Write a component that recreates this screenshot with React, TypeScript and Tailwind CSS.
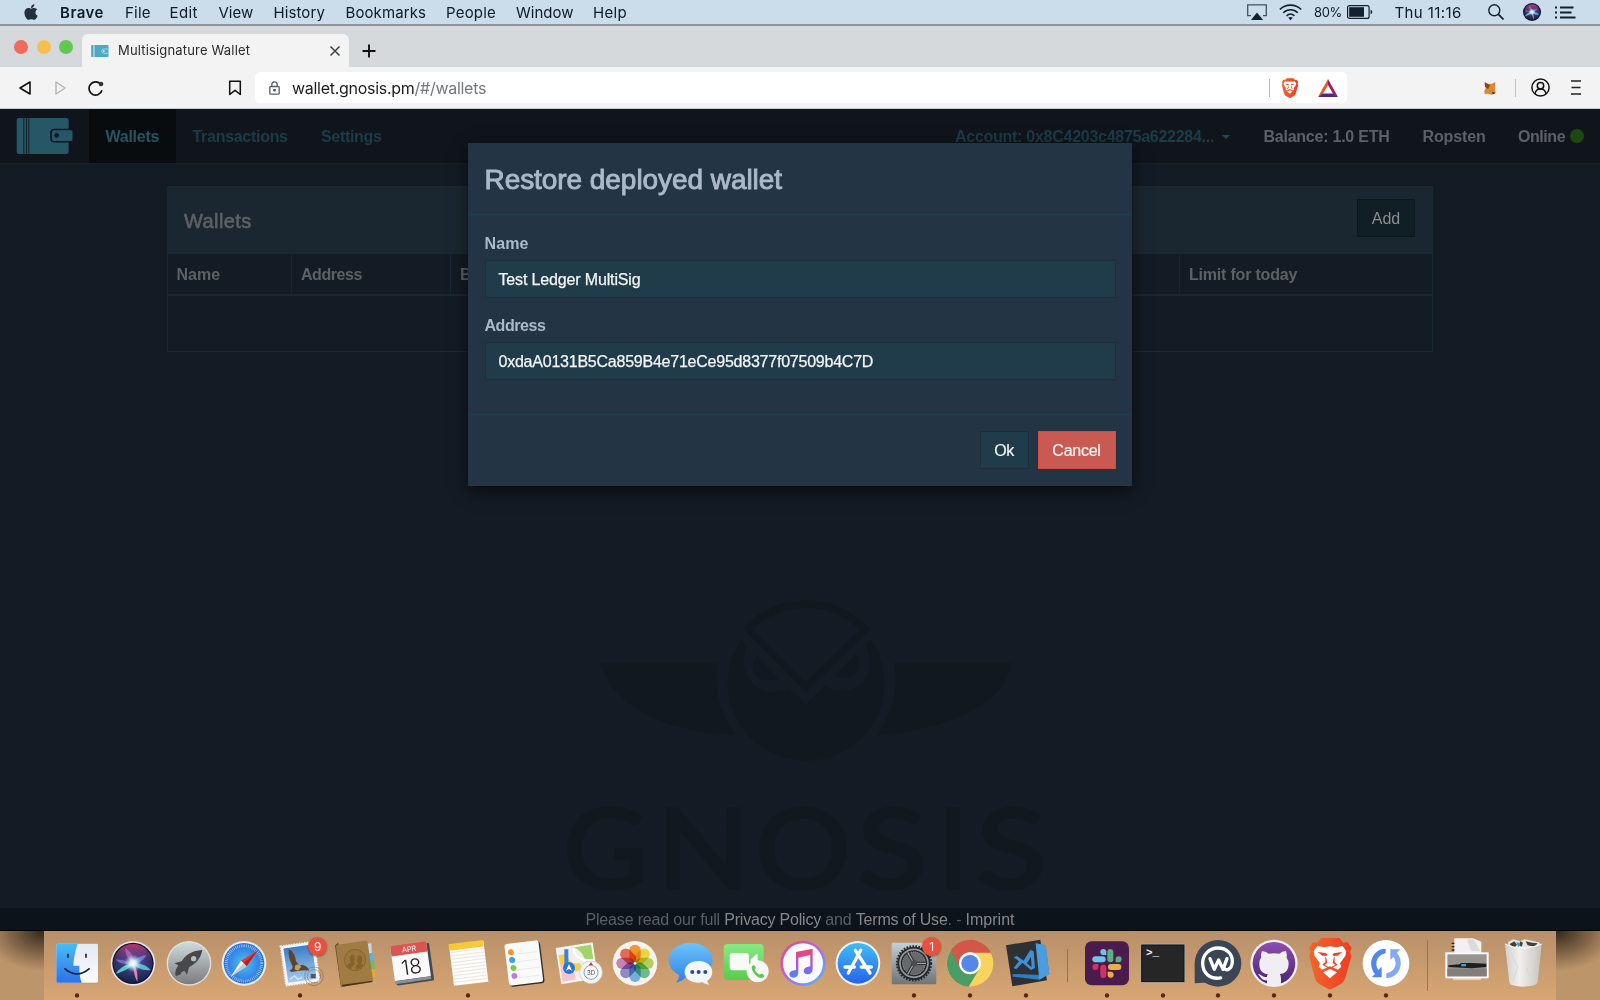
import React from 'react';
import { FaApple } from 'react-icons/fa';

const menuItems = [
  { label: 'Brave', cls: 'w-[65px] font-semibold tracking-[0.5px]' },
  { label: 'File', cls: 'w-[44.5px] tracking-[0.25px]' },
  { label: 'Edit', cls: 'w-[49px] tracking-[0.4px]' },
  { label: 'View', cls: 'w-[55px]' },
  { label: 'History', cls: 'w-[72px] tracking-[0.1px]' },
  { label: 'Bookmarks', cls: 'w-[100.5px] tracking-[0.1px]' },
  { label: 'People', cls: 'w-[70px] tracking-[0.2px]' },
  { label: 'Window', cls: 'w-[77px]' },
  { label: 'Help', cls: 'w-[40px] tracking-[0.3px]' },
];

function MenuBar() {
  return (
    <div className="flex h-6 shrink-0 items-center bg-[#cbdceb] text-[15px] leading-6 text-[#0d1a28]">
      <FaApple className="ml-[21.500px] mr-[20.500px] h-[18px] w-[18px] shrink-0 text-[#222f3d]" />
      {menuItems.map((m) => (
        <span key={m.label} className={`shrink-0 whitespace-nowrap pt-px ${m.cls}`}>{m.label}</span>
      ))}
      <div className="ml-auto flex items-center pr-[24.500px]">
        <svg className="mr-[12px]" width="20" height="17" viewBox="0 0 20 17">
          <path d="M4 11.7H.7V.8h18.600v10.900H16" fill="none" stroke="#44525f" strokeWidth="1.3" />
          <path d="M10 8.500 16 16H4Z" fill="#13202d" />
        </svg>
        <svg className="mr-[12px]" width="23" height="17" viewBox="0 0 23 17" fill="none" stroke="#13202d" strokeWidth="1.600">
          <path d="M.8 5.500C6.500-.4 16.500-.4 22.200 5.500M4.300 8.700c4-4 10.400-4 14.400 0M7.600 11.800c2.300-2.100 5.500-2.100 7.800 0" />
          <path d="M11.500 16.200 9.300 13.800q2.200-1.800 4.400 0Z" fill="#13202d" stroke="none" />
        </svg>
        <span className="w-[33px] text-[13px] tracking-[-0.4px]">80%</span>
        <svg className="mr-[21.500px]" width="26" height="14" viewBox="0 0 26 14">
          <rect x=".6" y=".6" width="21.500" height="12.800" rx="2" fill="none" stroke="#13202d" strokeWidth="1.200" />
          <rect x="2.200" y="2.200" width="14.800" height="9.600" fill="#13202d" />
          <path d="M23.600 4.500q3.500 2.500 0 5Z" fill="#13202d" />
        </svg>
        <span className="w-[93px] whitespace-nowrap pt-px tracking-[0.4px]">Thu 11:16</span>
        <svg className="mr-[19px]" width="16" height="16" viewBox="0 0 16 16" fill="none" stroke="#13202d" strokeWidth="1.400">
          <circle cx="6.300" cy="6.300" r="5.500" />
          <path d="m10.200 10.200 5.300 5.300" strokeWidth="1.700" />
        </svg>
        <svg className="mr-[14px]" width="18" height="18" viewBox="0 0 134 134"><circle cx="67" cy="67" r="67" fill="#14142c" /><SiriOrb /></svg>
        <svg width="21" height="13" viewBox="0 0 21 13" stroke="#13202d" strokeWidth="2">
          <path d="M5 1.500h13.500M5 6.500h11.500M5 11.500h15.500" />
          <path d="M0 1.500h2M0 6.500h2M0 11.500h2" />
        </svg>
      </div>
    </div>
  );
}

function SiriOrb() {
  return (
    <g>
      <defs>
        <radialGradient id="siriBase" cx=".5" cy=".5" r=".5">
          <stop offset="0" stopColor="#7d63a8" />
          <stop offset=".55" stopColor="#3a2a66" />
          <stop offset="1" stopColor="#140f2a" />
        </radialGradient>
        <linearGradient id="siriHue" x1="0" y1="0" x2="0" y2="1">
          <stop offset="0" stopColor="#e0407f" stopOpacity=".8" />
          <stop offset=".45" stopColor="#4a4fa0" stopOpacity=".4" />
          <stop offset="1" stopColor="#0b2a45" stopOpacity=".8" />
        </linearGradient>
        <radialGradient id="siriCore"><stop offset="0" stopColor="#fff" /><stop offset=".35" stopColor="#e8fbff" stopOpacity=".9" /><stop offset="1" stopColor="#9fe8ff" stopOpacity="0" /></radialGradient>
      </defs>
      <circle cx="67" cy="67" r="62" fill="url(#siriBase)" />
      <circle cx="67" cy="67" r="58" fill="url(#siriHue)" />
      <path d="M66 68C50 66 24 84 16 98 36 92 56 84 66 68Z" fill="#5ff0e0" opacity=".8" />
      <path d="M68 68c22-2 42 6 52 20C98 88 82 84 68 68Z" fill="#5fd8ea" opacity=".8" />
      <path d="M66 68c2 20 6 40 14 54 2-24-2-44-14-54Z" fill="#f28ac0" opacity=".9" />
      <path d="M68 66c0-22-8-36-24-44 0 20 8 36 24 44Z" fill="#d68ad8" opacity=".5" />
      <path d="M68 66c10-18 26-22 38-24-4 14-18 24-38 24Z" fill="#7a9af5" opacity=".7" />
      <path d="M66 66C44 60 28 54 16 56c10 12 32 16 50 10Z" fill="#b0a0f0" opacity=".5" />
      <circle cx="67" cy="67" r="26" fill="url(#siriCore)" />
    </g>
  );
}

function TabStrip() {
  return (
    <div className="flex h-[43px] shrink-0 items-end border-t-2 border-[#8c959b] bg-[#d5d9dc] pl-[14px]">
      <div className="mb-[13px] flex w-[68px] gap-[8.500px]">
        <span className="h-[14px] w-[14px] rounded-full bg-[#f06a5e]" />
        <span className="h-[14px] w-[14px] rounded-full bg-[#f7bf4f]" />
        <span className="h-[14px] w-[14px] rounded-full bg-[#63c756]" />
      </div>
      <div className="flex h-[33px] w-[267px] items-center rounded-t-[6px] bg-[#f3f3f3] pl-[9px] pr-[8px]">
        <svg className="mr-[9px]" width="18" height="12" viewBox="0 0 53 36">
          <path d="M2 0h5v36H2q-2 0-2-2V2Q0 0 2 0Z" fill="#4fa9c6" />
          <path d="M8 0h3v36H8Z" fill="#86c5d8" />
          <path d="M11 0h39q2 0 2 2v32q0 2-2 2H11Z" fill="#4fa9c6" />
          <path d="M53 12H38a6.500 6.500 0 0 0 0 13h15" fill="none" stroke="#a9dbe8" strokeWidth="2.500" />
          <circle cx="38" cy="18.500" r="3" fill="#d5eef5" />
        </svg>
        <span className="whitespace-nowrap pt-px text-[13px] tracking-[0.17px] text-[#2b2b2b]">Multisignature Wallet</span>
        <svg className="ml-auto" width="12" height="12" viewBox="0 0 12 12" stroke="#3c4043" strokeWidth="1.500"><path d="m1.500 1.500 9 9m0-9-9 9" /></svg>
      </div>
      <svg className="mb-[9px] ml-[13px]" width="14" height="14" viewBox="0 0 14 14" stroke="#111" strokeWidth="1.900"><path d="M7 .5v13M.5 7h13" /></svg>
    </div>
  );
}

function BraveLion() {
  return (
    <g>
      <path d="M364 54h54l12 14 12-2 13 17-5 12 4 14-18 64q-4 12-12 18l-28 15q-6 3-12 0l-28-15q-8-6-12-18l-16-64 4-14-5-12 13-17 12 2Z" fill="url(#braveOrange)" />
      <path d="M341 94 352 78 372 82 390 79 408 82 428 78 439 94 436 108 420 130 424 140 414 149 390 139 366 149 356 140 360 130 344 108Z" fill="#fff" />
      <path d="M353 96 376 99 383 103 379 108 367 107ZM427 96 404 99 397 103 401 108 413 107Z" fill="#ee4623" />
      <path d="M378 110 382 128 374 135 390 143 406 135 398 128 402 110 404 112 404 126 413 134 390 148 367 134 376 126 376 112Z" fill="#ee4623" />
      <path d="M369 157 390 147 411 157 390 175Z" fill="#fff" />
    </g>
  );
}

function Toolbar() {
  return (
    <div className="flex h-[42px] shrink-0 items-center border-b border-[#c9cdd0] bg-[#f3f3f3]">
      <svg className="ml-[17.500px]" width="14" height="16" viewBox="0 0 14 16" fill="none" stroke="#111" strokeWidth="1.600" strokeLinejoin="round"><path d="M12 2v12L2 8Z" /></svg>
      <svg className="ml-[21px]" width="14" height="16" viewBox="0 0 14 16" fill="none" stroke="#b5b5b5" strokeWidth="1.400" strokeLinejoin="round"><path d="M3 2v12l9-6Z" /></svg>
      <svg className="ml-[20px]" width="18" height="16" viewBox="0 0 18 16" fill="none" stroke="#111" strokeWidth="1.700"><path d="M13.500 4A6.600 6.600 0 1 0 15 10.300" /><circle cx="14" cy="4" r="2.300" fill="#333" stroke="none" /></svg>
      <svg className="ml-[123px]" width="14" height="16" viewBox="0 0 14 16" fill="none" stroke="#111" strokeWidth="1.500" strokeLinejoin="round"><path d="M1.700 1.200h10.600v13.300L7 10.300l-5.300 4.200Z" /></svg>
      <div className="ml-[13.500px] flex h-[31px] w-[1092px] items-center rounded-[5px] bg-white pl-[14px] pr-[9.500px]">
        <svg width="11" height="14" viewBox="0 0 11 14" fill="none" stroke="#5a5e62" strokeWidth="1.300"><rect x=".8" y="5.500" width="9.400" height="7.700" rx="1" /><path d="M2.800 5.500V3.500a2.700 2.700 0 0 1 5.400 0v2" /><circle cx="5.500" cy="9.300" r=".8" fill="#222" /></svg>
        <span className="ml-[12px] whitespace-nowrap text-[16px] tracking-[-0.28px] text-[#1d1d1f]">wallet.gnosis.pm<span className="text-[#75787c]">/#/wallets</span></span>
        <span className="ml-auto h-[18px] w-px bg-[#b9b9b9]" />
        <svg className="ml-[11px]" width="18" height="20" viewBox="324 52 134 156">
          <defs><linearGradient id="braveOrange" x1="0" x2="1"><stop offset="0" stopColor="#f2652b" /><stop offset="1" stopColor="#ee3d23" /></linearGradient></defs>
          <BraveLion />
        </svg>
        <svg className="ml-[19px]" width="20" height="18" viewBox="0 0 20 18">
          <path d="M10 0v6L4.800 15 0 18Z" fill="#f0502b" />
          <path d="M10 0v6l5.200 9L20 18Z" fill="#9a1f5f" />
          <path d="M0 18h20l-4.800-3.600H4.800Z" fill="#4b2a87" />
        </svg>
      </div>
      <svg className="ml-[137px]" width="12" height="14" viewBox="0 0 36 42">
        <path d="M2 4 12 9 24 8 34 3 33 24 35 36 24 41 10 38 2 40 1 30 6 20Z" fill="#dd8635" />
        <path d="M2 4 12 9 18 12 12 24 3 18Z" fill="#7b4a23" />
        <path d="m24 32 10 4-7 4Z" fill="#2b1b12" />
      </svg>
      <span className="ml-[18.500px] h-[18px] w-px bg-[#c4c4c4]" />
      <svg className="ml-[15px]" width="19" height="19" viewBox="0 0 19 19" fill="none" stroke="#111" strokeWidth="1.500"><circle cx="9.500" cy="9.500" r="8.600" /><circle cx="9.500" cy="7.700" r="3.200" /><path d="M4 16c.4-3.400 2.500-5 5.500-5s5.100 1.600 5.500 5" /></svg>
      <svg className="ml-[21px]" width="10" height="15" viewBox="0 0 10 15" stroke="#222" strokeWidth="1.500"><path d="M0 1h10M.5 7.500h9M0 14h10" /></svg>
    </div>
  );
}

function WalletLogo() {
  return (
    <svg width="57" height="36" viewBox="0 0 167 108" className="shrink-0">
      <rect x="0" y="0" width="156" height="108" rx="7" fill="#265766" />
      <path d="M21.500 0v108M29.500 0v108M36.500 0v108" stroke="#0f151b" strokeWidth="2.500" />
      <path d="M167 35h-54q-10 0-10 10v16q0 10 10 10h54" fill="#265766" stroke="#0f151b" strokeWidth="5" />
      <rect x="106" y="37" width="61" height="32" rx="8" fill="#265766" />
      <circle cx="120" cy="52" r="7" fill="#0f151b" />
      <rect x="158" y="28" width="9" height="7" fill="#0f151b" /><rect x="158" y="72" width="9" height="6" fill="#0f151b" />
    </svg>
  );
}

function NavBar() {
  return (
    <div className="flex h-[55px] shrink-0 items-center border-b border-[#14222a] bg-[#0f151b] pl-[16px] font-['Liberation_Sans',sans-serif] text-[16px] font-bold">
      <WalletLogo />
      <span className="ml-[16px] flex h-full w-[87px] items-center bg-[#080c0f] pl-[16.500px] pt-[2px] tracking-[-0.26px] text-[#275464]">Wallets</span>
      <span className="ml-[16.500px] w-[128.500px] pt-[2px] tracking-[-0.29px] text-[#1d3b48]">Transactions</span>
      <span className="pt-[2px] tracking-[-0.31px] text-[#1d3b48]">Settings</span>
      <div className="ml-auto flex items-center whitespace-nowrap pr-[16px] pt-[2px] text-[#5d6166]">
        <span className="w-[267px] tracking-[-0.27px] text-[#1d3b48]">Account: 0x8C4203c4875a622284...</span>
        <span className="mr-[33.500px] h-0 w-0 border-x-[4px] border-t-[4px] border-x-transparent border-t-[#24485a]" />
        <span className="w-[159px] tracking-[-0.24px]">Balance: 1.0 ETH</span>
        <span className="w-[95.500px] tracking-[-0.14px]">Ropsten</span>
        <span className="w-[52px] tracking-[-0.45px]">Online</span>
        <span className="-mt-[2px] mr-[0.500px] h-[13.500px] w-[13.500px] rounded-full bg-[#1e4712]" />
      </div>
    </div>
  );
}

function WalletsPanel() {
  return (
    <div className="mx-auto mt-[22px] w-[1266px] shrink-0 border border-[#1a2930] font-['Liberation_Sans',sans-serif] text-[16px] text-[#5d6166]">
      <div className="flex h-[67px] items-center justify-between bg-[#1b2730] pl-[16px] pr-[17px]">
        <span className="text-[20px] tracking-[0.4px] [-webkit-text-stroke:0.6px_#5d6166]">Wallets</span>
        <span className="-mt-[5px] flex h-[38px] w-[58px] items-center justify-center border border-[#0b171c] bg-[#101e25] pt-px text-[#8b8d8e]">Add</span>
      </div>
      <div className="flex h-[42px] border-b-2 border-[#1a2730] font-bold leading-[42px]">
        <span className="h-[40px] w-[124px] border-r border-[#1a2730] pl-[8.500px]">Name</span>
        <span className="h-[40px] w-[159px] border-r border-[#1a2730] pl-[9px] tracking-[-0.45px]">Address</span>
        <span className="h-[40px] w-[729px] border-r border-[#1a2730] pl-[9px]">Balance</span>
        <span className="h-[40px] pl-[9px] tracking-[-0.2px]">Limit for today</span>
      </div>
      <div className="h-[55px]" />
    </div>
  );
}

const wordmark = [
  { ch: 'G', x: 69, w: 251 },
  { ch: 'N', x: 346, w: 272 },
  { ch: 'O', x: 636, w: 284 },
  { ch: 'S', x: 937, w: 208 },
  { ch: 'I', x: 1175, w: 93 },
  { ch: 'S', x: 1289, w: 210 },
];

function GnosisMark() {
  return (
    <svg className="ml-[540px] mt-auto block h-[328px] w-[530px] shrink-0 overflow-visible" viewBox="0 3 1568 984" preserveAspectRatio="none" fill="#10191f">
      <path fillRule="evenodd" d="M600 148A250 250 0 0 1 975 150L787 340ZM627 152 787 310 947 152A228 228 0 0 0 627 152Z" />
      <path d="M595 183A232 232 0 1 0 980 183L963 198C995 265 965 335 895 335 873 335 855 328 843 322L787 377 737 328C650 370 575 290 612 200Z" />
      <path d="M640 230 705 297C655 320 610 280 640 230ZM937 225 872 291C920 315 965 275 937 225Z" />
      <path d="M180 251H525C515 330 530 400 578 467 380 460 220 390 180 251ZM1393 251H1047C1060 330 1045 400 998 467 1190 455 1380 380 1393 251Z" />
      <g fontFamily="Lato, sans-serif" fontSize="332" stroke="#10191f" strokeWidth="9">
        {wordmark.map((l, i) => (
          <text key={i} x={l.x} y="926" textLength={l.w} lengthAdjust="spacingAndGlyphs">{l.ch}</text>
        ))}
      </g>
    </svg>
  );
}

function Field({ label, value, cls, labelCls }: { label: string; value: string; cls: string; labelCls: string }) {
  return (
    <div className="mb-[16.500px]">
      <div className={`mb-[5px] h-[23px] font-bold leading-[24px] ${labelCls}`}>{label}</div>
      <div className={`flex h-[37.500px] items-center border border-[#1b303c] bg-[#203b49] pl-[13px] pt-[2px] text-[#f4f6f7] [-webkit-text-stroke:0.25px_#f4f6f7] ${cls}`}>{value}</div>
    </div>
  );
}

function RestoreModal() {
  return (
    <div className="absolute left-[468px] top-[143px] h-[343px] w-[664px] bg-[#233544] font-['Liberation_Sans',sans-serif] text-[16px] text-[#abb9c8] shadow-[0_5px_16px_rgba(0,0,0,0.6)]">
      <div className="flex h-[72px] items-center border-b border-[#213d49] pl-[16.500px] pt-[2px] text-[28px] tracking-[-0.06px] [-webkit-text-stroke:0.9px_#abb9c8]">Restore deployed wallet</div>
      <div className="h-[199px] pl-[16.500px] pr-[16.500px] pt-[17px]">
        <Field label="Name" value="Test Ledger MultiSig" cls="tracking-[-0.15px]" labelCls="tracking-[0.1px]" />
        <Field label="Address" value="0xdaA0131B5Ca859B4e71eCe95d8377f07509b4C7D" cls="tracking-[-0.23px]" labelCls="tracking-[-0.45px]" />
      </div>
      <div className="flex justify-end gap-[8.500px] border-t border-[#213d49] pr-[16.500px] pt-[16px] text-[#f4f6f7] [-webkit-text-stroke:0.2px_#f4f6f7]">
        <span className="flex h-[38px] w-[49px] items-center justify-center border border-[#1b303c] bg-[#203b49] pr-px pt-px tracking-[-0.5px]">Ok</span>
        <span className="flex h-[38px] w-[78px] items-center justify-center border border-[#d64a45] bg-[#c95a52] pt-px tracking-[-0.25px]">Cancel</span>
      </div>
    </div>
  );
}

function Footer() {
  return (
    <div className="flex h-[22px] shrink-0 items-center justify-center whitespace-pre bg-[#0d131a] pt-[2px] font-['Liberation_Sans',sans-serif] text-[16px] leading-[20px] tracking-[-0.17px] text-[#5a5f66]">
      <span>Please read our full </span>
      <span className="tracking-[-0.2px] text-[#85878a]">Privacy Policy</span>
      <span> and </span>
      <span className="tracking-[-0.2px] text-[#85878a]">Terms of Use</span>
      <span>. - </span>
      <span className="tracking-normal text-[#85878a]">Imprint</span>
    </div>
  );
}

/* Dock icons: each cell is drawn on a 168 x 205 grid, centred on cx. */
function DockIcon({ cx, dot, badge, children }: { cx: number; dot?: boolean; badge?: string; children: React.ReactNode }) {
  return (
    <div className="relative h-[68.300px] w-[55.820px] shrink-0">
      <svg className="block h-full w-full overflow-visible" viewBox={`${cx - 84} 33 167.5 205`}>
        {children}
        {dot && <circle cx={cx} cy="226.500" r="6.500" fill="#5a2210" />}
      </svg>
      {badge && (
        <span className="absolute left-[36px] top-[6px] flex h-[19px] w-[19px] items-center justify-center rounded-full bg-[#e9503f] text-[12px] text-white shadow-[0_1px_2px_rgba(0,0,0,0.4)]">{badge}</span>
      )}
    </div>
  );
}

const petals = [
  { a: 0, c: '#f7941e' }, { a: 45, c: '#f5dc35' }, { a: 90, c: '#b4d456' }, { a: 135, c: '#5fbf8a' },
  { a: 180, c: '#6ab0e6' }, { a: 225, c: '#8a86cf' }, { a: 270, c: '#c47db8' }, { a: 315, c: '#ee5f4e' },
];

function Dock() {
  return (
    <div className="relative flex h-[69px] w-[1512px] shrink-0 overflow-hidden rounded-t-[5px] bg-linear-to-b from-[#b8906a] to-[#d8a674] pl-[5px]">
      <DockIcon cx={230} dot>
        <defs>
          <linearGradient id="fBlue" x1="0" y1="0" x2="0" y2="1"><stop offset="0" stopColor="#47bdf6" /><stop offset="1" stopColor="#2f71ea" /></linearGradient>
          <linearGradient id="fWhite" x1="0" y1="0" x2="0" y2="1"><stop offset="0" stopColor="#e3eaf2" /><stop offset="1" stopColor="#fafbfd" /></linearGradient>
        </defs>
        <rect x="168" y="71" width="125" height="119" rx="5" fill="#9a7758" opacity=".6" />
        <rect x="168" y="71" width="125" height="117" rx="4" fill="url(#fWhite)" />
        <path d="M172 71h60c-8 24-12 44-13 66h18c-1 20 2 36 7 51h-72q-4 0-4-4V75q0-4 4-4Z" fill="url(#fBlue)" />
        <path d="M203 101v12M257 101v12" stroke="#15243a" strokeWidth="5" />
        <path d="M192 145q38 33 76 0" fill="none" stroke="#15243a" strokeWidth="5" />
      </DockIcon>
      <DockIcon cx={397}>
        <circle cx="397" cy="130" r="67" fill="#e4e4ea" />
        <g transform="translate(330 63)"><SiriOrb /></g>
      </DockIcon>
      <DockIcon cx={566}>
        <defs><linearGradient id="gLaunch" x1="0" y1="0" x2="0" y2="1"><stop offset="0" stopColor="#d0dadd" /><stop offset="1" stopColor="#7b7b7d" /></linearGradient></defs>
        <circle cx="566" cy="130" r="67" fill="#dfe2e2" /><circle cx="566" cy="130" r="63" fill="url(#gLaunch)" />
        <path d="M606 90c-30 2-50 14-62 34l-22 6 12 6-8 14 12 10 14-8 8 12 6-22c22-12 36-28 40-52Z" fill="#46484b" />
        <circle cx="580" cy="116" r="8" fill="#b5bcbf" />
        <path d="M530 148c-6 4-6 14-4 20 8-2 16-4 18-10-6 0-12-4-14-10Z" fill="#46484b" />
      </DockIcon>
      <DockIcon cx={733}>
        <defs><radialGradient id="gSaf"><stop offset="0" stopColor="#4fc4f0" /><stop offset="1" stopColor="#2a6fe0" /></radialGradient></defs>
        <circle cx="733" cy="130" r="67" fill="#e9edf1" /><circle cx="733" cy="130" r="61" fill="url(#gSaf)" />
        <circle cx="733" cy="130" r="53" fill="none" stroke="#d7ebfa" strokeWidth="9" strokeDasharray="1.800 3.750" opacity=".85" />
        <path d="M775 90 724 122 741 139Z" fill="#e33b34" /><path d="M741 139 775 90 732 130Z" fill="#b91f22" />
        <path d="M693 170 724 122 741 139Z" fill="#f3f3f3" /><path d="M693 170 741 139 732 130Z" fill="#c3c8cc" />
      </DockIcon>
      <DockIcon cx={900} dot badge="9">
        <defs><linearGradient id="gMail" x1="0" y1="0" x2="0" y2="1"><stop offset="0" stopColor="#3d7cc9" /><stop offset="1" stopColor="#a8cbe8" /></linearGradient></defs>
        <g transform="rotate(-8 900 130)">
          <rect x="849" y="71" width="102" height="120" fill="#f5f5f5" stroke="#f5f5f5" strokeWidth="5" strokeDasharray="4 4" />
          <rect x="857" y="79" width="86" height="104" fill="url(#gMail)" />
        </g>
        <path d="M866 88c12 4 20 18 22 36l10 12c14-4 26 4 30 16-12-2-20 0-30 0l-24 4-6-6c6 0 10-4 10-10-6-14-14-28-12-52Z" fill="#5d452c" />
        <path d="M886 136c8-4 14-2 18 4l-10 12-10-4Z" fill="#c79d5e" />
        <g fill="none" stroke="#555" opacity=".5" strokeWidth="2.500"><circle cx="942" cy="169" r="28" /><circle cx="942" cy="169" r="20" /></g>
        <rect x="932" y="162" width="15" height="13" fill="#2b3f58" opacity=".8" />
        <path d="m870 178 14-10 10 10 12-6" stroke="#eaf2fa" strokeWidth="4" fill="none" opacity=".7" />
      </DockIcon>
      <DockIcon cx={1068}>
        <path d="m1102 72 12-3 2 30-12 2Z" fill="#c9d8e8" /><path d="m1104 100 14-2 3 24-12 2Z" fill="#51b7e8" /><path d="m1108 124 14-2 3 24-12 2Z" fill="#68c354" /><path d="m1112 149 13-2 2 24-12 3Z" fill="#f2a13b" />
        <path d="m1005 76 10-8 12 130-4 4Z" fill="#5b4522" />
        <path d="m1012 74 84-12q6-1 7 5l16 112q1 7-6 8l-86 13q-4 1-5-4l-14-116q0-5 4-6Z" fill="#a17c42" />
        <path d="m1027 200 90-14v-4l-91 12Z" fill="#4a3718" />
        <circle cx="1065" cy="120" r="32" fill="#9a763d" stroke="#86642f" strokeWidth="3" />
        <path d="M1040 140q2-8 12-12-6-16 2-24 10-2 10 12-1 8-3 12l5 4q-12 6-12 14-10-1-14-6ZM1066 146q0-10 8-14-6-14 2-26 12 0 10 18-1 5-3 8l8 4q-8 12-25 10Z" fill="#84622d" />
      </DockIcon>
      <DockIcon cx={36}>
        <g transform="rotate(-8 36 130)">
          <rect x="-18" y="76" width="113" height="114" rx="4" fill="#454a50" />
          <rect x="-22" y="72" width="109" height="104" rx="3" fill="#fafafa" />
          <rect x="-22" y="176" width="109" height="9" fill="#8b9096" />
          <path d="M-22 101V75q0-5 5-5h99q5 0 5 5v26Z" fill="#dc5450" />
          <text x="33" y="94" textAnchor="middle" fontFamily="Inter" fontSize="22" fill="#fff">APR</text>
          <text x="33" y="162" textAnchor="middle" fontFamily="Inter" fontWeight="300" fontSize="62" fill="#1d1d1f">18</text>
        </g>
      </DockIcon>
      <DockIcon cx={203} dot>
        <g transform="rotate(-7 203 130)">
          <rect x="153" y="68" width="104" height="124" fill="#fdfcf8" />
          <path d="M153 92h104M153 102h104M153 112h104M153 122h104M153 132h104M153 142h104M153 152h104M153 162h104M153 172h104M153 182h104" stroke="#d5d2ca" strokeWidth="1.500" />
          <rect x="152" y="66" width="104" height="20" fill="#f6c93b" />
        </g>
      </DockIcon>
      <DockIcon cx={371}>
        <g transform="rotate(-7 371 130)">
          <rect x="321" y="70" width="105" height="126" rx="9" fill="#2e2d2d" />
          <rect x="319" y="66" width="103" height="126" rx="8" fill="#fafafa" />
          <path d="M350 100h64M350 123h64M350 147h64M350 171h64" stroke="#ddd" strokeWidth="1.500" />
          <circle cx="336" cy="92" r="9" fill="#f7932b" /><circle cx="337" cy="116" r="9" fill="#35a2ee" /><circle cx="338" cy="140" r="9" fill="#72cf4d" /><circle cx="338" cy="164" r="9" fill="#c07ad9" />
        </g>
      </DockIcon>
      <DockIcon cx={538}>
        <path d="m468 84 111-17 16 108-110 18Z" fill="#f4f4f0" />
        <path d="m475 90 99-16 14 95-97 16Z" fill="#efeee8" />
        <path d="m524 82 50-8 7 44-24 4Q548 94 524 82Z" fill="#a0d56c" />
        <path d="m481 132 40 8 8 38-40 8Z" fill="#f3c6cf" /><path d="m477 106 20-4 20 28 24 0 8 20-20 4-26-16-22-6Z" fill="#f9cc4b" />
        <path d="M500 88v60" stroke="#3b82d8" strokeWidth="12" />
        <path d="m520 84q6 30 36 36l28 2" stroke="#fff" strokeWidth="7" fill="none" />
        <circle cx="508" cy="144" r="18" fill="#2b76d2" /><path d="m508 132 9 20-9-5-9 5Z" fill="#fff" />
        <circle cx="574" cy="157" r="34" fill="#f5f6f6" stroke="#c9c9c9" strokeWidth="2" /><circle cx="574" cy="157" r="21" fill="none" stroke="#8fa2ad" strokeWidth="3" />
        <path d="m574 126 6 9h-12Z" fill="#e0322a" /><text x="574" y="164" textAnchor="middle" fontFamily="Inter" fontSize="18" fill="#4b4b4b">3D</text>
      </DockIcon>
      <DockIcon cx={707}>
        <circle cx="707" cy="130" r="67" fill="#f6f3ef" />
        {petals.map((p) => (
          <rect key={p.a} x="690" y="74" width="34" height="54" rx="17" fill={p.c} className="mix-blend-multiply" opacity=".9" transform={`rotate(${p.a} 707 130)`} />
        ))}
        <circle cx="707" cy="130" r="4" fill="#fff" />
      </DockIcon>
      <DockIcon cx={874}>
        <defs><linearGradient id="gMsg" x1="0" y1="0" x2="0" y2="1"><stop offset="0" stopColor="#6cc4f8" /><stop offset="1" stopColor="#2f80ea" /></linearGradient></defs>
        <path d="M873 69c38 0 66 22 66 52s-28 52-66 52l-14-1c-8 8-18 14-30 16 6-8 9-14 9-24-18-8-31-24-31-43 0-30 28-52 66-52Z" fill="url(#gMsg)" />
        <path d="M896 123c24 0 42 14 42 33 0 11-6 20-15 26 0 4 2 8 6 12-8-1-14-3-20-7-4 1-8 1-13 1-24 0-41-13-41-32s18-33 41-33Z" fill="#f3f6fa" />
        <circle cx="878" cy="156" r="6" fill="#2c4f82" /><circle cx="897" cy="156" r="6" fill="#2c4f82" /><circle cx="917" cy="156" r="6" fill="#2c4f82" />
      </DockIcon>
      <DockIcon cx={1042}>
        <defs><linearGradient id="gFt" x1="0" y1="0" x2="0" y2="1"><stop offset="0" stopColor="#86ea83" /><stop offset="1" stopColor="#5acb4e" /></linearGradient></defs>
        <rect x="972" y="72" width="120" height="108" rx="11" fill="url(#gFt)" />
        <rect x="990" y="99" width="58" height="52" rx="10" fill="#f8faf8" /><path d="m1053 118 17-15q4-3 4 2v42l-21-14Z" fill="#f8faf8" />
        <circle cx="1074" cy="154" r="33" fill="#f7f7f7" />
        <path d="M1058 138c4-4 8-2 10 4 1 3-1 5-3 7 3 7 9 13 16 15 2-3 5-4 8-2 5 3 6 7 2 10-6 4-14 2-22-6-10-9-16-22-11-28Z" fill="#58c94d" />
      </DockIcon>
      <DockIcon cx={7}>
        <defs>
          <linearGradient id="gIt" x1="0" y1="0" x2="1" y2="1"><stop offset="0" stopColor="#f5436a" /><stop offset=".5" stopColor="#b266e8" /><stop offset="1" stopColor="#3ec3f5" /></linearGradient>
          <linearGradient id="gNote" x1="0" y1="0" x2="0" y2="1"><stop offset="0" stopColor="#f0446a" /><stop offset=".6" stopColor="#a35be0" /><stop offset="1" stopColor="#3f8df0" /></linearGradient>
        </defs>
        <circle cx="7" cy="130" r="68" fill="url(#gIt)" /><circle cx="7" cy="130" r="60" fill="#faf9fc" />
        <path d="m-14 96 50-10v60c0 12-8 17-15 17-8 0-12-5-12-10 0-8 8-12 20-14v-34l-36 8v44c0 12-8 16-15 16s-12-4-12-10c0-8 8-12 20-13Z" fill="url(#gNote)" />
      </DockIcon>
      <DockIcon cx={176}>
        <defs><linearGradient id="gAs" x1="0" y1="0" x2="0" y2="1"><stop offset="0" stopColor="#3fbdf7" /><stop offset="1" stopColor="#2663ea" /></linearGradient></defs>
        <circle cx="176" cy="130" r="67" fill="#eef2f6" /><circle cx="176" cy="130" r="61" fill="url(#gAs)" />
        <path d="m184 91-37 68M168 91l44 68M137 141h28M186 141h30" stroke="#fff" strokeWidth="10" strokeLinecap="round" />
      </DockIcon>
      <DockIcon cx={343} dot badge="1">
        <defs><linearGradient id="gPref" x1="0" y1="0" x2="0" y2="1"><stop offset="0" stopColor="#c3d0d8" /><stop offset="1" stopColor="#707376" /></linearGradient></defs>
        <rect x="276" y="68" width="134" height="125" rx="4" fill="url(#gPref)" />
        <circle cx="343" cy="130" r="50" fill="#26282a" /><circle cx="343" cy="130" r="51" fill="none" stroke="#26282a" strokeWidth="7" strokeDasharray="5 4" />
        <circle cx="343" cy="130" r="42" fill="none" stroke="#96999b" strokeWidth="5" />
        <circle cx="343" cy="130" r="34" fill="#66696c" /><circle cx="343" cy="130" r="34" fill="none" stroke="#a3a6a8" strokeWidth="3" strokeDasharray="3 3" />
        <path d="M343 130h36M343 130l-19-33M343 130l-19 33" stroke="#202224" strokeWidth="9" /><path d="M343 130h36M343 130l-19-33M343 130l-19 33" stroke="#a1a5a8" strokeWidth="4" />
        <circle cx="343" cy="130" r="9" fill="#4a4d50" />
      </DockIcon>
      <DockIcon cx={510} dot>
        <circle cx="510" cy="130" r="70" fill="#f9d35c" />
        <path d="M452 92A70 70 0 0 0 506 200L538 147 510 130Z" fill="#4b9d63" />
        <path d="M452 91A70 70 0 0 1 573 98H510L482 146Z" fill="#d3564b" />
        <circle cx="510" cy="130" r="33" fill="#fff" /><circle cx="510" cy="130" r="26" fill="#5588e6" />
      </DockIcon>
      <DockIcon cx={677} dot>
        <path d="m617 76 103-17 20 122-104 18Z" fill="#2f3033" />
        <path d="m706 70 30 6 11 86-30 17-80-9v-8l84 3Z" fill="#2d7ec4" /><path d="m706 70 30 6 11 86-30 17Z" fill="#4a9ee0" />
        <path d="m640 112 10-4 20 14 20-32 10 4 4 50-12 6-26-22-18 20-8-4 16-20Zm52-2-12 20 14 12Z" fill="#3d8fd6" fillRule="evenodd" />
      </DockIcon>
      <div className="ml-[13.200px] mr-[11px] mt-[18px] h-[33px] w-px shrink-0 bg-[#98704a]" />
      <DockIcon cx={920} dot>
        <rect x="854" y="64" width="132" height="132" rx="20" fill="#4b1b4d" />
        <g strokeWidth="18" strokeLinecap="round">
          <path d="M885 118h22" stroke="#6fc6ea" /><path d="M930 96v22" stroke="#57b182" /><path d="M932 141h22" stroke="#e5b04b" /><path d="M909 143v22" stroke="#d6305f" />
        </g>
        <path d="M918 105h-9a9 9 0 1 1 9-9Z" fill="#6fc6ea" /><path d="M946 127v-9a9 9 0 1 1 9 9Z" fill="#57b182" /><path d="M922 155h9a9 9 0 1 1-9 9Z" fill="#e5b04b" /><path d="M894 132v9a9 9 0 1 1-9-9Z" fill="#d6305f" />
      </DockIcon>
      <DockIcon cx={1087} dot>
        <rect x="1020" y="71" width="133" height="117" rx="4" fill="#aab5b9" /><rect x="1023" y="75" width="127" height="110" fill="#262626" stroke="#111" strokeWidth="3" />
        <text x="1036" y="108" fontFamily="Liberation Mono" fontWeight="700" fontSize="33" fill="#f0f0f0">&gt;_</text>
      </DockIcon>
      <DockIcon cx={56} dot>
        <circle cx="56" cy="130" r="70" fill="#3b4553" /><path d="M-14 132v58l60-4Z" fill="#3b4553" />
        <path d="M64 174c-34 5-54-16-54-44 0-26 20-46 46-46s43 18 43 40c0 24-20 34-28 16" fill="none" stroke="#fff" strokeWidth="10" strokeLinecap="round" />
        <path d="m32 116 13 32 13-28 13 28 12-32" fill="none" stroke="#fff" strokeWidth="10" strokeLinecap="round" strokeLinejoin="round" />
      </DockIcon>
      <DockIcon cx={223} dot>
        <defs><linearGradient id="gGh" x1="0" y1="0" x2="0" y2="1"><stop offset="0" stopColor="#8d4fae" /><stop offset="1" stopColor="#4a2575" /></linearGradient></defs>
        <circle cx="223" cy="130" r="71" fill="#f0eef2" /><circle cx="223" cy="130" r="64" fill="url(#gGh)" />
        <path d="M187 93q14 2 20 8 16-3 32 0 8-7 20-8 4 12 2 20 6 8 6 18 0 28-26 32 3 6 3 14v16q-21 6-42 0v-12c-18 3-20-16-28-18 10-3 14 10 28 8 0-4 1-6 3-8-26-4-26-24-26-32 0-8 2-14 6-18-2-10 0-14 2-20Z" fill="#f0eef2" />
      </DockIcon>
      <DockIcon cx={390} dot><BraveLion /></DockIcon>
      <DockIcon cx={557} dot>
        <circle cx="557" cy="130" r="70" fill="#fff" />
        <path d="M556 86v14c-24 4-36 28-22 50l10-10v32h-30l10-10c-26-34-4-76 32-76Z" fill="#5585e6" />
        <path d="M558 174v-14c24-4 36-28 22-50l-10 10V88h30l-10 10c26 34 4 76-32 76Z" fill="#84a9f1" />
      </DockIcon>
      <div className="ml-[13px] mr-[11px] mt-[9px] h-[51px] w-px shrink-0 bg-[#9a744e]" />
      <DockIcon cx={800}>
        <path d="M762 55h56l25 10v40h-81Z" fill="#f1f1f1" /><path d="M800 58h20l20 36-28-2Z" fill="#dadada" /><path d="M754 70h8M754 80h8M754 90h8" stroke="#222" strokeWidth="4" />
        <rect x="758" y="170" width="84" height="10" fill="#d9d5d0" />
        <rect x="735" y="97" width="130" height="78" fill="#fafafa" /><rect x="741" y="103" width="118" height="66" fill="#989590" />
        <rect x="741" y="146" width="118" height="23" fill="#827e7a" />
        <path d="m744 136 34-3 4-4h32l44 2v10l-44 4-30-2-40-2Z" fill="#1d1e20" /><rect x="783" y="132" width="14" height="7" fill="#3f9fe0" />
      </DockIcon>
      <DockIcon cx={970}>
        <defs><linearGradient id="gTr" x1="0" x2="1"><stop offset="0" stopColor="#d2d0cd" /><stop offset=".4" stopColor="#f1f0ef" /><stop offset="1" stopColor="#c6c3bf" /></linearGradient></defs>
        <path d="m925 66 16-8 20 6 14-6 22 4 24 6-8 24h-84Z" fill="#e8e6e2" />
        <path d="m930 72 14-8 8 10-10 12ZM962 64l8 4-4 12-8-4ZM978 64l20 4 16 2-10 10-20-4Z" fill="#45403c" /><path d="m950 66 12 4-6 12Z" fill="#3c9bc9" />
        <path d="M916 72q54 24 110 0l-12 114q-2 8-10 10-34 8-66 0-8-2-9-10Z" fill="url(#gTr)" />
        <path d="M916 72q54 24 110 0" stroke="#f5f5f4" strokeWidth="4" fill="none" />
        <path d="m934 100 20 40-14 44M1006 98l-24 50 16 36" stroke="#dad7d4" strokeWidth="3" fill="none" />
      </DockIcon>
    </div>
  );
}

export default function App() {
  return (
    <div className="relative flex h-[1000px] w-[1600px] flex-col overflow-hidden bg-[#131b24] font-['Inter',sans-serif]">
      <MenuBar />
      <TabStrip />
      <Toolbar />
      <NavBar />
      <main className="flex min-h-0 flex-1 flex-col">
        <WalletsPanel />
        <GnosisMark />
      </main>
      <Footer />
      <div className="flex h-[70px] shrink-0 justify-between border-t border-black bg-[#bd956a]">
        <div className="w-[44px] shrink-0 bg-[radial-gradient(ellipse_60px_40px_at_100%_0,#33261b,transparent)]" />
        <Dock />
        <div className="w-[44px] shrink-0 bg-[radial-gradient(ellipse_60px_40px_at_0_0,#33261b,transparent)]" />
      </div>
      <RestoreModal />
    </div>
  );
}
